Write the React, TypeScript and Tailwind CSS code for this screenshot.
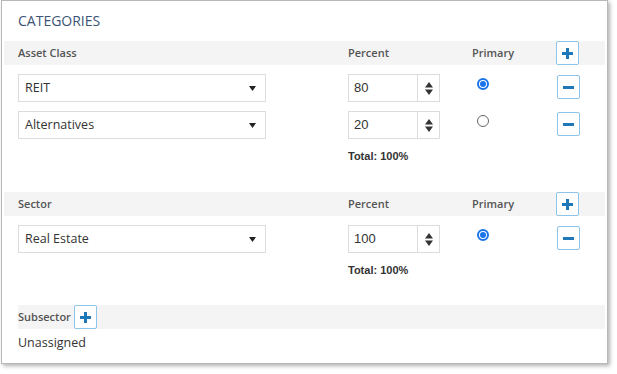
import React from 'react';

const PlusIcon = () => (
  <svg width="11" height="11" viewBox="0 0 11 11">
    <rect x="4" y="0" width="3" height="11" fill="#1f77b8" />
    <rect x="0" y="4" width="11" height="3" fill="#1f77b8" />
  </svg>
);

const MinusIcon = () => (
  <svg width="11" height="11" viewBox="0 0 11 11">
    <rect x="0" y="4" width="11" height="3" fill="#1f77b8" />
  </svg>
);

const IconButton: React.FC<{ kind: 'plus' | 'minus'; className?: string }> = ({ kind, className = '' }) => (
  <button
    className={`flex items-center justify-center w-[23px] h-[24px] border border-[#8cc4ea] rounded-[2px] bg-white ${className}`}
  >
    {kind === 'plus' ? <PlusIcon /> : <MinusIcon />}
  </button>
);

const Radio: React.FC<{ checked: boolean }> = ({ checked }) =>
  checked ? (
    <span className="mt-[4px] ml-[37px] w-[12px] h-[12px] rounded-full border-[2px] border-[#1a73e8] flex items-center justify-center">
      <span className="w-[6px] h-[6px] rounded-full bg-[#1a73e8]" />
    </span>
  ) : (
    <span className="mt-[4px] ml-[37px] w-[12px] h-[12px] rounded-full border border-[#666]" />
  );

const Row: React.FC<{ label: string; value: string; primary: boolean }> = ({ label, value, primary }) => (
  <div className="flex items-start">
    <div className="ml-[16px] w-[248px] h-[28px] border border-[#dcdcdc] flex items-center justify-between pl-[6px] pr-[9px] text-[12.5px] text-[#333]">
      <span>{label}</span>
      <svg width="7" height="5" viewBox="0 0 7 5">
        <path d="M0 0 H7 L3.5 5 Z" fill="#222" />
      </svg>
    </div>
    <div className="ml-[82px] w-[92px] h-[28px] border border-[#dcdcdc] flex">
      <span className="flex-1 flex items-center pl-[5px] text-[13px] text-[#333] font-['Liberation_Sans',Arial,sans-serif]">
        {value}
      </span>
      <span className="w-[22px] border-l border-[#dcdcdc] flex items-center justify-center">
        <svg width="8" height="13" viewBox="0 0 8 13">
          <path d="M4 0 L8 5.5 H0 Z" fill="#333" />
          <path d="M0 7.5 H8 L4 13 Z" fill="#333" />
        </svg>
      </span>
    </div>
    <Radio checked={primary} />
    <IconButton kind="minus" className="ml-[68px] mt-[1px]" />
  </div>
);

const HeaderBar: React.FC<{ title: string }> = ({ title }) => (
  <div className="mx-[2px] h-[24px] bg-[#f4f4f4] flex items-center pl-[14px] text-[11px] font-semibold text-[#555]">
    <span className="w-[330px]">{title}</span>
    <span className="w-[124px]">Percent</span>
    <span className="w-[84px]">Primary</span>
    <IconButton kind="plus" />
  </div>
);

const Total = ({ mb }: { mb: string }) => (
  <div className={`ml-[346px] mt-[9px] h-[16px] leading-[16px] text-[11px] font-bold text-[#333] font-['Liberation_Sans',Arial,sans-serif] ${mb}`}>
    Total: 100%
  </div>
);

export default function App() {
  return (
    <div className="bg-white w-[617px] h-[374px] font-['Open_Sans',sans-serif]">
      <div className="ml-[1px] w-[607px] h-[364px] border border-[#b8b8b8] bg-white shadow-[2px_2px_4px_rgba(0,0,0,0.3)]">
        <div className="pt-[10px] pl-[16px] h-[40px] text-[14px] leading-[20px] text-[#3b5475]">CATEGORIES</div>

        <HeaderBar title="Asset Class" />
        <div className="mt-[9px] flex flex-col gap-[9px]">
          <Row label="REIT" value="80" primary />
          <Row label="Alternatives" value="20" primary={false} />
        </div>
        <Total mb="mb-[28px]" />

        <HeaderBar title="Sector" />
        <div className="mt-[9px]">
          <Row label="Real Estate" value="100" primary />
        </div>
        <Total mb="mb-[27px]" />

        <div className="ml-[16px] mr-[2px] h-[24px] bg-[#f4f4f4] flex items-center text-[11px] font-semibold text-[#555]">
          <span>Subsector</span>
          <IconButton kind="plus" className="ml-[3px] w-[22px] h-[23px]" />
        </div>
        <div className="ml-[16px] mt-[5px] text-[12.5px] leading-[18px] text-[#333]">Unassigned</div>
      </div>
    </div>
  );
}
